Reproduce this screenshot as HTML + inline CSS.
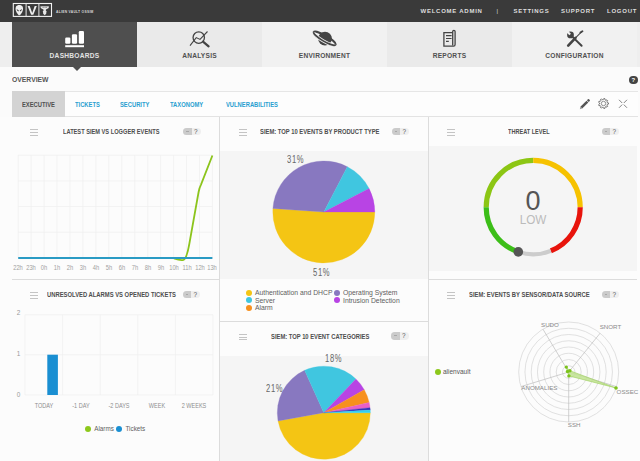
<!DOCTYPE html>
<html><head><meta charset="utf-8">
<style>
*{margin:0;padding:0;box-sizing:border-box}
html,body{width:640px;height:461px;overflow:hidden;background:#fcfcfc;font-family:"Liberation Sans",sans-serif}
.a{position:absolute}
.t{position:absolute;white-space:nowrap;line-height:1}
#top{left:0;top:0;width:640px;height:22px;background:#3a3a3a}
.nav{color:#dedede;font-size:6px;font-weight:bold;letter-spacing:0.75px;top:8px}
.tab{top:22px;height:45px;width:125px}
.tabl{top:52.6px;font-size:6.6px;font-weight:bold;letter-spacing:0.25px;color:#505050;width:125px;text-align:center}
.sub{top:100.6px;font-size:7.6px;font-weight:bold;color:#2a9fd0;transform-origin:0 0}
.panel{position:absolute;background:#fcfcfc}
.ham{position:absolute;width:8px;height:6.6px;border-top:1px solid #c4c4c4;border-bottom:1px solid #c4c4c4}
.ham:after{content:"";position:absolute;left:0;top:2px;width:8px;height:1px;background:#c4c4c4}
.ptitle{position:absolute;white-space:nowrap;line-height:1;font-size:7px;font-weight:bold;color:#4e4e4e;transform-origin:0 0;transform:scaleX(0.81)}
.tog{position:absolute;width:17.5px;height:7.5px;border-radius:3.75px;background:#efefef}
.tog:before{content:"";position:absolute;left:0;top:0;width:8.8px;height:7.5px;border-radius:3.75px 0 0 3.75px;background:#cbcbcb;box-shadow:inset 0 0 0 0 #000}
.tog:after{content:"?";position:absolute;left:11px;top:1.2px;font-size:6.4px;color:#555;line-height:1}
.tog i{position:absolute;left:3.2px;top:3.2px;width:2.8px;height:1.1px;background:#a8a8a8}
.lbl{position:absolute;white-space:nowrap;line-height:1;color:#bbb}
.leg{position:absolute;white-space:nowrap;line-height:1;color:#606060;font-size:6.8px}
.pct{font-size:10px;letter-spacing:0.9px;color:#666;transform:scaleX(0.76);transform-origin:0 0}
.dot{position:absolute;width:6px;height:6px;border-radius:3px}
</style></head><body>
<!-- top bar -->
<div id="top" class="a">
  <svg class="a" style="left:12px;top:2px" width="42" height="16" viewBox="0 0 42 16">
    <rect x="1.3" y="1.5" width="38.2" height="12.9" fill="none" stroke="#f2f2f2" stroke-width="1.1"/>
    <path d="M14.1 1.5 V14.4 M26.9 1.5 V14.4" stroke="#e8e8e8" stroke-width="1"/>
    <path d="M7.3 3.1 C4.3 3.1 3.3 5.3 3.6 7.4 C4 9.9 6 13.2 7.3 13.2 C8.6 13.2 10.6 9.9 11 7.4 C11.3 5.3 10.3 3.1 7.3 3.1Z" fill="#eee"/>
    <path d="M4.6 7.1 L6.9 8.4 L6.4 9.6 Q4.8 9 4.6 7.1Z M10 7.1 L7.7 8.4 L8.2 9.6 Q9.8 9 10 7.1Z" fill="#3a3a3a"/>
    <path d="M15.6 3.9 L17.7 3.9 L20.2 11 L22.7 3.9 L24.8 3.9 L21.3 12.8 L19.1 12.8Z" fill="#eee"/>
    <path d="M28.2 4.6 Q32.7 3.2 37.2 4.6 Q37.2 6.6 34 7.6 L33.8 8.6 Q35.3 9.4 34.3 10.6 Q35 12 32.7 13.2 Q30.4 12 31.1 10.6 Q30.1 9.4 31.6 8.6 L31.4 7.6 Q28.2 6.6 28.2 4.6Z" fill="#e6e6e6"/>
    <path d="M30.5 5.3 Q32.7 4.6 35 5.3" stroke="#3a3a3a" stroke-width="0.6" fill="none"/>
  </svg>
  <div class="t" style="left:56px;top:11.2px;font-size:3.3px;font-weight:bold;color:#d8d8d8;letter-spacing:0.28px">ALIEN VAULT OSSIM</div>
  <div class="t nav" style="left:420.5px">WELCOME ADMIN</div>
  <div class="t nav" style="left:496.5px;font-weight:normal">|</div>
  <div class="t nav" style="left:513.5px">SETTINGS</div>
  <div class="t nav" style="left:561px">SUPPORT</div>
  <div class="t nav" style="left:607px">LOGOUT</div>
</div>
<!-- main tabs -->
<div class="a" style="left:0;top:22px;width:640px;height:45px;background:#eeeeee"></div>
<div class="a tab" style="left:12px;background:#4f4f4f"></div>
<div class="a tab" style="left:137px;background:#eaeaea"></div>
<div class="a tab" style="left:262px;background:#f1f1f1"></div>
<div class="a tab" style="left:387px;background:#eaeaea"></div>
<div class="a tab" style="left:512px;background:#f1f1f1"></div>
<div class="tabl t" style="left:12px;color:#e2e2e2">DASHBOARDS</div>
<div class="tabl t" style="left:137px">ANALYSIS</div>
<div class="tabl t" style="left:262px">ENVIRONMENT</div>
<div class="tabl t" style="left:387px">REPORTS</div>
<div class="tabl t" style="left:512px">CONFIGURATION</div>
<!-- tab icons -->
<svg class="a" style="left:64px;top:30px" width="22" height="18" viewBox="0 0 22 18">
  <rect x="1.2" y="7.5" width="5.2" height="6.2" rx="1.2" fill="#fff"/>
  <rect x="7.9" y="4.2" width="5.2" height="9.5" rx="1.2" fill="#fff"/>
  <rect x="14.8" y="1" width="5.2" height="12.7" rx="1.2" fill="#fff"/>
  <rect x="1.2" y="15.2" width="18.8" height="2" fill="#fff"/>
</svg>
<svg class="a" style="left:188px;top:29px" width="24" height="19" viewBox="0 0 24 19">
  <circle cx="10.75" cy="8.6" r="5.7" fill="none" stroke="#444" stroke-width="1.3"/>
  <path d="M15 12.6 L20.6 17.4" stroke="#444" stroke-width="2.2" stroke-linecap="round"/>
  <path d="M2 16.6 L8.25 8.6 L12 10.4 L19.5 2.5" fill="none" stroke="#444" stroke-width="1.1"/>
</svg>
<svg class="a" style="left:312px;top:29px" width="26" height="19" viewBox="0 0 26 19">
  <ellipse cx="12.6" cy="9.4" rx="12.6" ry="2.9" transform="rotate(30 12.6 9.4)" fill="none" stroke="#444" stroke-width="2"/>
  <circle cx="13" cy="9.6" r="6.9" fill="#444"/>
  <path d="M23.51 15.70 A12.6 2.9 30 0 1 1.69 3.10" fill="none" stroke="#efefef" stroke-width="3.4"/>
  <path d="M23.51 15.70 A12.6 2.9 30 0 1 1.69 3.10" fill="none" stroke="#444" stroke-width="1.7"/>
</svg>
<svg class="a" style="left:441px;top:29px" width="16" height="20" viewBox="0 0 16 20">
  <path d="M11.6 3.6 H2.9 V17.2 H12.6 Q14.1 17.2 14.1 15.6 V2.6 Q14.1 1.4 12.9 1.4 Q11.7 1.4 11.7 2.6 V16.2" fill="none" stroke="#444" stroke-width="1.3"/>
  <path d="M5 6.6 H10.6 M5 9.5 H10.6 M5 12.4 H7.8" stroke="#444" stroke-width="1.1"/>
</svg>
<svg class="a" style="left:565px;top:30px" width="20" height="18" viewBox="0 0 20 18">
  <circle cx="5.5" cy="4.9" r="3.4" fill="#444"/>
  <rect x="-1.1" y="-4.5" width="2.2" height="4.6" fill="#f1f1f1" transform="translate(5.1 4.5) rotate(-45)"/>
  <path d="M6.5 5.9 L16.6 15.8" stroke="#444" stroke-width="2" stroke-linecap="round"/>
  <path d="M16.5 1.8 L9.5 8.8" stroke="#444" stroke-width="1.1" stroke-linecap="round"/>
  <path d="M15.5 2.5 L17.4 1.2" stroke="#444" stroke-width="1.9" stroke-linecap="round"/>
  <path d="M10.5 7.8 L3.2 15.6" stroke="#444" stroke-width="2.6" stroke-linecap="round"/>
</svg>
<!-- overview -->
<div class="a" style="left:0;top:67px;width:640px;height:50px;background:#fbfbfb"></div>
<svg class="a" style="left:72px;top:66px" width="10" height="6"><path d="M0 0 L10 0 L5 5Z" fill="#4f4f4f"/></svg>
<div class="t" style="left:12px;top:76px;font-size:7.4px;font-weight:bold;color:#555;transform:scaleX(0.92);transform-origin:0 0">OVERVIEW</div>
<div class="a" style="left:629px;top:75.5px;width:8.5px;height:8.5px;border-radius:50%;background:#444;color:#fff;font-size:6px;font-weight:bold;text-align:center;line-height:8.5px">?</div>
<div class="a" style="left:12px;top:91px;width:626px;height:1px;background:#e6e6e6"></div>
<div class="a" style="left:12px;top:92px;width:626px;height:25px;background:#fdfdfd;border-bottom:1px solid #e3e3e3"></div>
<div class="a" style="left:12px;top:91px;width:53px;height:26px;background:#d3d3d3"></div>
<div class="t sub" style="left:22px;color:#505050;transform:scaleX(0.765)">EXECUTIVE</div>
<div class="t sub" style="left:75px;transform:scaleX(0.765)">TICKETS</div>
<div class="t sub" style="left:120px;transform:scaleX(0.765)">SECURITY</div>
<div class="t sub" style="left:169.5px;transform:scaleX(0.765)">TAXONOMY</div>
<div class="t sub" style="left:225.5px;transform:scaleX(0.765)">VULNERABILITIES</div>
<svg class="a" style="left:578px;top:97px" width="13" height="13" viewBox="0 0 13 13">
  <path d="M4.2 11.6 L10.3 5.5 L8.5 3.7 L2.4 9.8Z" fill="#555"/>
  <path d="M8.9 3.3 L9.9 2.3 Q10.5 1.7 11.1 2.3 L11.7 2.9 Q12.3 3.5 11.7 4.1 L10.7 5.1Z" fill="#555"/>
  <path d="M2.4 9.8 L4.2 11.6 L1.8 12.2Z" fill="#999"/>
</svg>
<svg class="a" style="left:597px;top:97px" width="13" height="13" viewBox="0 0 13 13">
  <path d="M10.30 5.61 L11.47 5.93 L11.47 7.07 L10.30 7.39 L9.98 8.26 L10.67 9.25 L9.94 10.13 L8.84 9.62 L8.04 10.08 L7.93 11.29 L6.80 11.49 L6.28 10.39 L5.37 10.23 L4.51 11.09 L3.52 10.51 L3.83 9.34 L3.24 8.64 L2.03 8.74 L1.64 7.66 L2.63 6.96 L2.63 6.04 L1.64 5.34 L2.03 4.26 L3.24 4.36 L3.83 3.66 L3.52 2.49 L4.51 1.91 L5.37 2.77 L6.28 2.61 L6.80 1.51 L7.93 1.71 L8.04 2.92 L8.84 3.38 L9.94 2.87 L10.67 3.75 L9.98 4.74Z" fill="none" stroke="#666" stroke-width="0.9" stroke-linejoin="round"/>
  <circle cx="6.5" cy="6.5" r="2.2" fill="none" stroke="#777" stroke-width="0.8"/>
</svg>
<svg class="a" style="left:617px;top:98px" width="12" height="12" viewBox="0 0 12 12">
  <path d="M2 1.8 L5.2 5 M10 1.8 L6.8 5 M2 9.8 L5.2 6.6 M10 9.8 L6.8 6.6" stroke="#777" stroke-width="0.9"/>
</svg>

<!-- panels -->

<div class="a" style="left:12px;top:117px;width:626px;height:344px;background:#fcfcfc"></div>
<!-- chart gray areas -->
<div class="a" style="left:220px;top:151px;width:208px;height:128px;background:#f5f5f5"></div>
<div class="a" style="left:429px;top:146px;width:208px;height:125px;background:#f5f5f5"></div>
<div class="a" style="left:220px;top:356px;width:208px;height:105px;background:#f5f5f5"></div>
<!-- borders -->
<div class="a" style="left:219px;top:117px;width:1px;height:344px;background:#dcdcdc"></div>
<div class="a" style="left:428px;top:117px;width:1px;height:344px;background:#dcdcdc"></div>

<div class="a" style="left:12px;top:279px;width:207px;height:1px;background:#dcdcdc"></div>
<div class="a" style="left:429px;top:279px;width:208px;height:1px;background:#dcdcdc"></div>
<div class="a" style="left:220px;top:320.5px;width:208px;height:1.2px;background:#dcdcdc"></div>

<!-- headers -->
<div class="ham" style="left:30px;top:129px"></div>
<div class="ptitle" style="left:63px;top:128px;transform:scaleX(0.809)">LATEST SIEM VS LOGGER EVENTS</div>
<div class="tog" style="z-index:0;left:183px;top:127.5px"><i></i></div>
<div class="ham" style="left:239px;top:129px"></div>
<div class="ptitle" style="left:260.2px;top:128px;transform:scaleX(0.832)">SIEM: TOP 10 EVENTS BY PRODUCT TYPE</div>
<div class="tog" style="z-index:0;left:391.5px;top:127.5px"><i></i></div>
<div class="ham" style="left:447px;top:129px"></div>
<div class="ptitle" style="left:508px;top:128px;transform:scaleX(0.794)">THREAT LEVEL</div>
<div class="tog" style="z-index:0;left:601.5px;top:127.5px"><i></i></div>
<div class="ham" style="left:30px;top:292px"></div>
<div class="ptitle" style="left:47px;top:291.3px;transform:scaleX(0.835)">UNRESOLVED ALARMS VS OPENED TICKETS</div>
<div class="tog" style="z-index:0;left:182.5px;top:290.5px"><i></i></div>
<div class="ham" style="left:239px;top:333.5px"></div>
<div class="ptitle" style="left:270.8px;top:333px;transform:scaleX(0.831)">SIEM: TOP 10 EVENT CATEGORIES</div>
<div class="tog" style="z-index:0;left:391px;top:332px"><i></i></div>
<div class="ham" style="left:447px;top:292px"></div>
<div class="ptitle" style="left:468.8px;top:291.3px;transform:scaleX(0.835)">SIEM: EVENTS BY SENSOR/DATA SOURCE</div>
<div class="tog" style="z-index:0;left:601.5px;top:290.5px"><i></i></div>

<svg class="a" style="left:0;top:0" width="640" height="461" viewBox="0 0 640 461">
 <!-- panel 1 grid -->
 <g stroke="#efefef" stroke-width="0.7" fill="none">
  <path d="M18.2 155.2 V258"/><path d="M31.1 155.2 V258"/><path d="M44.1 155.2 V258"/><path d="M57.0 155.2 V258"/><path d="M70.0 155.2 V258"/><path d="M82.9 155.2 V258"/><path d="M95.9 155.2 V258"/><path d="M108.8 155.2 V258"/><path d="M121.8 155.2 V258"/><path d="M134.7 155.2 V258"/><path d="M147.7 155.2 V258"/><path d="M160.6 155.2 V258"/><path d="M173.6 155.2 V258"/><path d="M186.5 155.2 V258"/><path d="M199.5 155.2 V258"/><path d="M212.4 155.2 V258"/><path d="M18.2 155.2 H212.4"/><path d="M18.2 181 H212.4"/><path d="M18.2 206.5 H212.4"/><path d="M18.2 232.2 H212.4"/>
 </g>
 <path d="M174 258.3 C177.5 259.6 180.5 260.6 183.5 259.8 C186 259 187.5 254 189.3 244 L198.6 192 C199.3 188 200 186.5 201 184.6 L212.4 155.5" fill="none" stroke="#8cc41c" stroke-width="1.8" stroke-linejoin="round"/>
 <path d="M18.2 258 H212.4" stroke="#2a9bc4" stroke-width="2"/>
 <!-- panel 4 grid -->
 <g stroke="#efefef" stroke-width="0.7" fill="none">
  <path d="M25.0 314.8 V395"/><path d="M62.6 314.8 V395"/><path d="M100.2 314.8 V395"/><path d="M137.8 314.8 V395"/><path d="M175.4 314.8 V395"/><path d="M213.0 314.8 V395"/><path d="M25 314.8 H213"/><path d="M25 354.8 H213"/><path d="M25 395 H213"/>
 </g>
 <rect x="47.3" y="354.7" width="10.6" height="40.3" fill="#1a8fd2"/>
 <!-- pie 1 -->
 <path d="M323.8 212 L374.80 212.00 A51 51 0 1 1 272.92 208.44Z" fill="#f4c514" stroke="#f4c514" stroke-width="0.3"/>
 <path d="M323.8 212 L272.92 208.44 A51 51 0 0 1 347.35 166.76Z" fill="#8878c0" stroke="#8878c0" stroke-width="0.3"/>
 <path d="M323.8 212 L347.35 166.76 A51 51 0 0 1 369.12 188.61Z" fill="#40c6e0" stroke="#40c6e0" stroke-width="0.3"/>
 <path d="M323.8 212 L369.12 188.61 A51 51 0 0 1 374.80 212.00Z" fill="#b844e4" stroke="#b844e4" stroke-width="0.3"/>
 <!-- pie 2 -->
 <path d="M323.8 412.7 L370.30 412.70 A46.5 46.5 0 0 1 278.03 420.93Z" fill="#f4c514" stroke="#f4c514" stroke-width="0.3"/>
 <path d="M323.8 412.7 L278.03 420.93 A46.5 46.5 0 0 1 304.59 370.35Z" fill="#8878c0" stroke="#8878c0" stroke-width="0.3"/>
 <path d="M323.8 412.7 L304.59 370.35 A46.5 46.5 0 0 1 355.93 379.08Z" fill="#40c6e0" stroke="#40c6e0" stroke-width="0.3"/>
 <path d="M323.8 412.7 L355.93 379.08 A46.5 46.5 0 0 1 364.23 389.73Z" fill="#b844e4" stroke="#b844e4" stroke-width="0.3"/>
 <path d="M323.8 412.7 L364.23 389.73 A46.5 46.5 0 0 1 369.16 402.48Z" fill="#f7901e" stroke="#f7901e" stroke-width="0.3"/>
 <path d="M323.8 412.7 L369.16 402.48 A46.5 46.5 0 0 1 370.03 407.68Z" fill="#e860c8" stroke="#e860c8" stroke-width="0.3"/>
 <path d="M323.8 412.7 L370.03 407.68 A46.5 46.5 0 0 1 370.23 410.10Z" fill="#3333bb" stroke="#3333bb" stroke-width="0.3"/>
 <path d="M323.8 412.7 L370.23 410.10 A46.5 46.5 0 0 1 370.30 412.70Z" fill="#30d0f0" stroke="#30d0f0" stroke-width="0.3"/>
 <!-- gauge -->
 <path d="M486.20 207.30 A47 47 0 0 1 533.20 160.30" fill="none" stroke="#8cc614" stroke-width="5.2"/>
 <path d="M533.20 160.30 A47 47 0 0 1 580.20 207.30" fill="none" stroke="#f6c200" stroke-width="5.2"/>
 <path d="M580.20 207.30 A47 47 0 0 1 550.81 250.88" fill="none" stroke="#e8140c" stroke-width="5.2"/>
 <path d="M550.81 250.88 A47 47 0 0 1 518.29 251.87" fill="none" stroke="#cccccc" stroke-width="4.2"/>
 <path d="M518.29 251.87 A47 47 0 0 1 486.20 207.30" fill="none" stroke="#3cbe18" stroke-width="5.2"/>
 <circle cx="518.3" cy="251.9" r="4.8" fill="#555"/>
 <!-- radar -->
 <g fill="none" stroke="#d4d4d4" stroke-width="0.7"><circle cx="568.7" cy="372" r="6.25"/><circle cx="568.7" cy="372" r="12.50"/><circle cx="568.7" cy="372" r="18.75"/><circle cx="568.7" cy="372" r="25.00"/><circle cx="568.7" cy="372" r="31.25"/><circle cx="568.7" cy="372" r="37.50"/><circle cx="568.7" cy="372" r="43.75"/><circle cx="568.7" cy="372" r="50.00"/></g>
 <path d="M568.7 372 L616.5 386.6 M568.7 372 L568.7 422.0 M568.7 372 L520.9 386.6 M568.7 372 L542.9 329.1 M568.7 372 L600.2 333.1" stroke="#bdbdbd" stroke-width="0.7"/>
 <polygon points="616,388 568.9,375.9 567.5,371.5 566.3,367.1 569.9,370.7" fill="#bfe28f" fill-opacity="0.85" stroke="#9ccf5a" stroke-width="0.6"/>
 <g fill="#7cc31c">
  <circle cx="616" cy="388" r="1.8"/><circle cx="568.9" cy="375.9" r="1.7"/><circle cx="567.5" cy="371.5" r="1.7"/><circle cx="566.3" cy="367.1" r="1.7"/><circle cx="569.9" cy="370.7" r="1.7"/>
 </g>
</svg>
<!-- panel1 labels -->
<div class="lbl" style="left:3.2px;top:264px;width:30px;text-align:center;font-size:7.2px;color:#a0a0a0;transform:scaleX(0.8)">22h</div><div class="lbl" style="left:16.1px;top:264px;width:30px;text-align:center;font-size:7.2px;color:#a0a0a0;transform:scaleX(0.8)">23h</div><div class="lbl" style="left:29.1px;top:264px;width:30px;text-align:center;font-size:7.2px;color:#a0a0a0;transform:scaleX(0.8)">0h</div><div class="lbl" style="left:42.0px;top:264px;width:30px;text-align:center;font-size:7.2px;color:#a0a0a0;transform:scaleX(0.8)">1h</div><div class="lbl" style="left:55.0px;top:264px;width:30px;text-align:center;font-size:7.2px;color:#a0a0a0;transform:scaleX(0.8)">2h</div><div class="lbl" style="left:67.9px;top:264px;width:30px;text-align:center;font-size:7.2px;color:#a0a0a0;transform:scaleX(0.8)">3h</div><div class="lbl" style="left:80.9px;top:264px;width:30px;text-align:center;font-size:7.2px;color:#a0a0a0;transform:scaleX(0.8)">4h</div><div class="lbl" style="left:93.8px;top:264px;width:30px;text-align:center;font-size:7.2px;color:#a0a0a0;transform:scaleX(0.8)">5h</div><div class="lbl" style="left:106.8px;top:264px;width:30px;text-align:center;font-size:7.2px;color:#a0a0a0;transform:scaleX(0.8)">6h</div><div class="lbl" style="left:119.7px;top:264px;width:30px;text-align:center;font-size:7.2px;color:#a0a0a0;transform:scaleX(0.8)">7h</div><div class="lbl" style="left:132.7px;top:264px;width:30px;text-align:center;font-size:7.2px;color:#a0a0a0;transform:scaleX(0.8)">8h</div><div class="lbl" style="left:145.6px;top:264px;width:30px;text-align:center;font-size:7.2px;color:#a0a0a0;transform:scaleX(0.8)">9h</div><div class="lbl" style="left:158.6px;top:264px;width:30px;text-align:center;font-size:7.2px;color:#a0a0a0;transform:scaleX(0.8)">10h</div><div class="lbl" style="left:171.5px;top:264px;width:30px;text-align:center;font-size:7.2px;color:#a0a0a0;transform:scaleX(0.8)">11h</div><div class="lbl" style="left:184.5px;top:264px;width:30px;text-align:center;font-size:7.2px;color:#a0a0a0;transform:scaleX(0.8)">12h</div><div class="lbl" style="left:197.4px;top:264px;width:30px;text-align:center;font-size:7.2px;color:#a0a0a0;transform:scaleX(0.8)">13h</div>
<!-- panel 4 labels -->
<div class="lbl" style="left:16.8px;top:310.3px;font-size:6.4px;color:#9a9a9a">2</div>
<div class="lbl" style="left:16.8px;top:350.8px;font-size:6.4px;color:#9a9a9a">1</div>
<div class="lbl" style="left:16.8px;top:391.8px;font-size:6.4px;color:#9a9a9a">0</div>
<div class="lbl" style="left:23.8px;top:401.8px;width:40px;text-align:center;font-size:7.2px;color:#8e8e8e;transform:scaleX(0.77)">TODAY</div><div class="lbl" style="left:61.4px;top:401.8px;width:40px;text-align:center;font-size:7.2px;color:#8e8e8e;transform:scaleX(0.77)">-1 DAY</div><div class="lbl" style="left:99.0px;top:401.8px;width:40px;text-align:center;font-size:7.2px;color:#8e8e8e;transform:scaleX(0.77)">-2 DAYS</div><div class="lbl" style="left:136.6px;top:401.8px;width:40px;text-align:center;font-size:7.2px;color:#8e8e8e;transform:scaleX(0.77)">WEEK</div><div class="lbl" style="left:174.2px;top:401.8px;width:40px;text-align:center;font-size:7.2px;color:#8e8e8e;transform:scaleX(0.77)">2 WEEKS</div>
<div class="dot" style="left:85px;top:426.2px;background:#8dc81c"></div>
<div class="leg" style="left:94.2px;top:426px;font-size:6.3px">Alarms</div>
<div class="dot" style="left:116.3px;top:426.2px;background:#1a8fd2"></div>
<div class="leg" style="left:125.5px;top:426px;font-size:6.3px">Tickets</div>
<!-- pie 1 labels -->
<div class="lbl pct" style="left:286.7px;top:155.2px">31%</div>
<div class="lbl pct" style="left:313px;top:268.4px">51%</div>
<div class="dot" style="left:246.3px;top:289.5px;background:#f4c514"></div>
<div class="leg" style="left:255px;top:289.9px">Authentication and DHCP</div>
<div class="dot" style="left:334px;top:289.5px;background:#8878c0"></div>
<div class="leg" style="left:343px;top:289.9px">Operating System</div>
<div class="dot" style="left:246.3px;top:297.2px;background:#40c6e0"></div>
<div class="leg" style="left:255px;top:297.7px">Server</div>
<div class="dot" style="left:334px;top:297.2px;background:#b844e4"></div>
<div class="leg" style="left:343px;top:297.7px">Intrusion Detection</div>
<div class="dot" style="left:246.3px;top:304.9px;background:#f7901e"></div>
<div class="leg" style="left:255px;top:305.4px">Alarm</div>
<!-- pie 2 labels -->
<div class="lbl pct" style="left:324.6px;top:353.8px">18%</div>
<div class="lbl pct" style="left:265.5px;top:383.7px">21%</div>
<!-- gauge text -->
<div class="lbl" style="left:520px;top:187.6px;width:26px;text-align:center;font-size:27px;color:#555">0</div>
<div class="lbl" style="left:513px;top:213.6px;width:40px;text-align:center;font-size:12.6px;color:#bbb;transform:scaleX(0.93)">LOW</div>
<!-- radar labels -->
<div class="lbl" style="left:541px;top:321.5px;font-size:6.2px;color:#8a8a8a">SUDO</div>
<div class="lbl" style="left:599.7px;top:323.8px;font-size:6.2px;color:#8a8a8a">SNORT</div>
<div class="lbl" style="left:521.3px;top:384.6px;font-size:6.2px;color:#8a8a8a">ANOMALIES</div>
<div class="lbl" style="left:616.6px;top:388.6px;font-size:6.2px;color:#8a8a8a">OSSEC</div>
<div class="lbl" style="left:567.8px;top:422px;font-size:6.2px;color:#8a8a8a">SSH</div>
<div class="dot" style="left:435px;top:368.5px;background:#8dc81c"></div>
<div class="leg" style="left:443px;top:369px;font-size:6.5px;color:#555">alienvault</div>

</body></html>
